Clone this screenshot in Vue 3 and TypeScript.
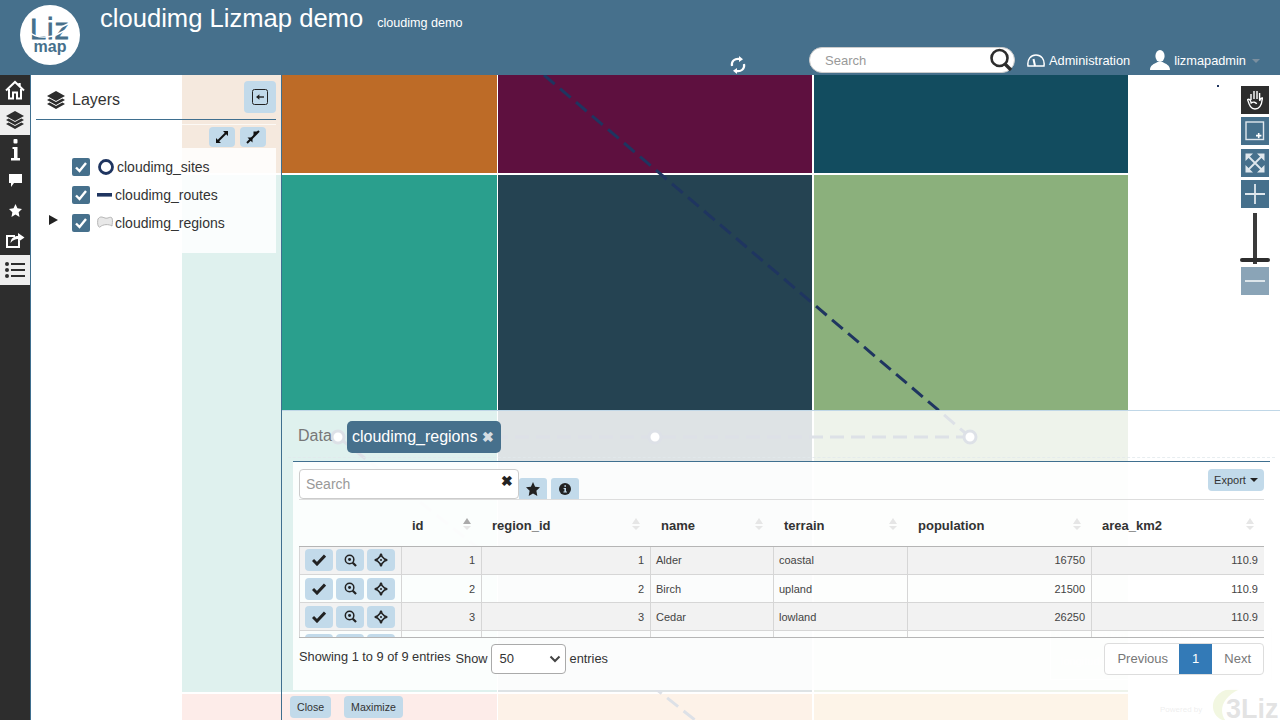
<script setup lang="ts">
const tiles = ['orange', 'plum', 'petrol', 'teal', 'slate', 'sage', 'coral', 'sand', 'cream']

const layers = [
  { name: 'cloudimg_sites', kind: 'point' },
  { name: 'cloudimg_routes', kind: 'line' },
  { name: 'cloudimg_regions', kind: 'poly' }
]

const columns = [
  { key: 'id', label: 'id', sorted: true },
  { key: 'region', label: 'region_id' },
  { key: 'name', label: 'name' },
  { key: 'terrain', label: 'terrain' },
  { key: 'population', label: 'population' },
  { key: 'area', label: 'area_km2' }
]

// fourth row only peeks out of the scroller, its text is below the fold
const rows = [
  { id: 1, region: 1, name: 'Alder', terrain: 'coastal', population: 16750, area: '110.9' },
  { id: 2, region: 2, name: 'Birch', terrain: 'upland', population: 21500, area: '110.9' },
  { id: 3, region: 3, name: 'Cedar', terrain: 'lowland', population: 26250, area: '110.9' },
  { id: '', region: '', name: '', terrain: '', population: '', area: '' }
]
</script>

<template>
  <div class="page">
    <!-- map canvas, everything else floats over it -->
    <div class="map">
      <div class="tiles">
        <div v-for="t in tiles" :key="t" class="tile" :class="'tile--' + t"></div>
      </div>
      <svg class="vectors" width="1280" height="645" viewBox="0 0 1280 645">
        <g fill="none" stroke="#1f3560" stroke-width="3" stroke-dasharray="14 7">
          <path d="M544 0 L970 362" />
          <path d="M970 362 L338 362" />
          <path d="M338 362 L695 645" />
        </g>
        <g fill="#fff" stroke="#1f3560" stroke-width="3">
          <circle cx="338" cy="362" r="6" />
          <circle cx="655" cy="362" r="6" />
          <circle cx="970" cy="362" r="6" />
        </g>
        <rect x="1217" y="10" width="2" height="2" fill="#1f3560" />
      </svg>
      <div class="scale-box">
        <span>0</span><span>50 km</span><span>100 km</span>
        <em>longitude</em>
      </div>
      <div class="credit">
        <span class="credit__by">Powered by</span>
        <svg class="credit__leaf" width="34" height="36" viewBox="0 0 34 36">
          <path d="M30 3 C14 0 2 10 3 22 C4 30 10 34 16 35 C9 27 10 12 30 3Z" fill="#a8c83a" />
        </svg>
        <span class="credit__name">3Liz</span>
      </div>
    </div>

    <header class="topbar">
      <div class="logo">
        <svg width="60" height="60" viewBox="0 0 60 60">
          <circle cx="30" cy="30" r="30" fill="#fff" />
          <text x="30" y="34" text-anchor="middle" class="logo__liz">Liz</text>
          <path d="M8 26 C15 33 24 33 33 31 M33 26 L52 17 M36 30 L52 22" fill="none" stroke="#fff" stroke-width="1.4" />
          <text x="30" y="47" text-anchor="middle" class="logo__map">map</text>
        </svg>
      </div>
      <div class="brand">
        <h1>cloudimg Lizmap demo</h1>
        <span>cloudimg demo</span>
      </div>
      <nav class="topnav">
        <svg class="refresh" width="16" height="18" viewBox="0 0 16 18" fill="none" stroke="#fff" stroke-width="2.2">
          <path d="M2 10 C1 5 5 2 10 3" />
          <path d="M14 8 C15 13 11 16 6 15" />
          <path d="M9 0 L13 3.2 L9 6Z" fill="#fff" stroke="none" />
          <path d="M7 18 L3 14.8 L7 12Z" fill="#fff" stroke="none" />
        </svg>
        <div class="search">
          <span>Search</span>
          <svg width="24" height="24" viewBox="0 0 24 24" fill="none" stroke="#2d2d2d">
            <circle cx="10.5" cy="10" r="8" stroke-width="2.6" />
            <path d="M16 16 L22 22" stroke-width="3.4" />
          </svg>
        </div>
        <a class="navlink navlink--admin">
          <svg width="18" height="13" viewBox="0 0 18 13" fill="none" stroke="#fff" stroke-width="1.5">
            <path d="M1 12 C0 5 4 1 9 1 C14 1 18 5 17 12Z" />
            <path d="M8 12 L6.5 5" stroke-width="2" />
          </svg>
          Administration
        </a>
        <a class="navlink navlink--user">
          <svg width="20" height="20" viewBox="0 0 20 20" fill="#fff">
            <ellipse cx="10" cy="6" rx="4.6" ry="6" />
            <path d="M0 20 C0 15 4 14 7.5 12 L12.5 12 C16 14 20 15 20 20Z" />
          </svg>
          lizmapadmin
          <i class="caret"></i>
        </a>
      </nav>
    </header>

    <div class="workspace">
      <aside class="dock">
        <div class="dock__item">
          <svg width="20" height="20" viewBox="0 0 20 20" fill="none" stroke="#fff" stroke-width="2">
            <path d="M1 10.5 L10 2 L19 10.5" />
            <path d="M4 9 V18.5 H8 V12.5 H12 V18.5 H16 V9" />
            <path d="M14.5 3 V6" stroke-width="2.4" />
          </svg>
        </div>
        <div class="dock__item dock__item--active">
          <svg width="18" height="20" viewBox="0 0 18 20" fill="#2d2d2d">
            <path d="M9 1 L18 6 L9 11 L0 6Z" />
            <path d="M2.6 8.6 L0 10 L9 15 L18 10 L15.4 8.6 L9 12 Z" />
            <path d="M2.6 12.6 L0 14 L9 19 L18 14 L15.4 12.6 L9 16 Z" />
          </svg>
        </div>
        <div class="dock__item">
          <svg width="9" height="22" viewBox="0 0 9 22" fill="#fff">
            <rect x="2.5" y="0" width="4" height="4.5" rx="1" />
            <path d="M1.5 8 H6.5 V19 H9 V21.5 H0 V19 H3 V10 H1.5Z" />
          </svg>
        </div>
        <div class="dock__item">
          <svg width="13" height="13" viewBox="0 0 13 13" fill="#fff">
            <path d="M0 0 H13 V9 H5 L2 13 V9 H0Z" />
          </svg>
        </div>
        <div class="dock__item">
          <svg width="13" height="13" viewBox="0 0 24 24" fill="#fff">
            <path d="M12 0 L15.6 8 L24 9 L17.8 15 L19.4 24 L12 19.6 L4.6 24 L6.2 15 L0 9 L8.4 8Z" />
          </svg>
        </div>
        <div class="dock__item">
          <svg width="19" height="16" viewBox="0 0 19 16" fill="none" stroke="#fff" stroke-width="2">
            <path d="M9 4 H1 V15 H13 V9" />
            <path d="M4.5 11 C5 6 8 4 12 4 V1 L18.5 5.5 L12 10 V7 C9 7 7 8 4.5 11Z" fill="#fff" stroke="none" />
          </svg>
        </div>
        <div class="dock__item dock__item--active">
          <svg width="20" height="16" viewBox="0 0 20 16" fill="#2d2d2d">
            <circle cx="2" cy="2" r="2" />
            <circle cx="2" cy="8" r="2" />
            <circle cx="2" cy="14" r="2" />
            <rect x="6" y="1" width="14" height="2" />
            <rect x="6" y="7" width="14" height="2" />
            <rect x="6" y="13" width="14" height="2" />
          </svg>
        </div>
      </aside>

      <section class="layers">
        <div class="layers__head">
          <svg class="layers__icon" width="18" height="20" viewBox="0 0 18 20" fill="#2d2d2d">
            <path d="M9 1 L18 6 L9 11 L0 6Z" />
            <path d="M2.6 8.6 L0 10 L9 15 L18 10 L15.4 8.6 L9 12 Z" />
            <path d="M2.6 12.6 L0 14 L9 19 L18 14 L15.4 12.6 L9 16 Z" />
          </svg>
          <span class="layers__title">Layers</span>
          <button class="btn-blue btn-collapse">
            <svg width="16" height="16" viewBox="0 0 16 16" fill="none" stroke="#222">
              <rect x="0.5" y="0.5" width="15" height="15" rx="2" />
              <path d="M12 8 H5" stroke-width="1.4" />
              <path d="M4 8 L7.4 5.2 V10.8Z" fill="#222" stroke="none" />
            </svg>
          </button>
        </div>
        <div class="layers__tools">
          <button class="btn-blue btn-small">
            <svg width="14" height="14" viewBox="0 0 14 14" fill="#111" stroke="#111">
              <path d="M3 11 L11 3" stroke-width="2" />
              <path d="M8 1 H13 V6Z M1 8 V13 H6Z" stroke="none" />
            </svg>
          </button>
          <button class="btn-blue btn-small">
            <svg width="14" height="14" viewBox="0 0 14 14" fill="#111" stroke="#111">
              <path d="M1 13 L13 1" stroke-width="2" />
              <path d="M7.5 1.5 H12.5 L7.5 6.5Z M1.5 7.5 H6.5 V12.5Z" stroke="none" />
            </svg>
          </button>
        </div>
        <ul class="tree">
          <li v-for="l in layers" :key="l.name" class="tree__row">
            <i v-if="l.kind === 'poly'" class="tree__toggle"></i>
            <span class="check">
              <svg width="14" height="14" viewBox="0 0 14 14" fill="none" stroke="#fff" stroke-width="2.4">
                <path d="M2 7.5 L5.5 11 L12 3" />
              </svg>
            </span>
            <svg v-if="l.kind === 'point'" class="symbol symbol--point" width="16" height="16" viewBox="0 0 16 16">
              <circle cx="8" cy="8" r="6.5" fill="none" stroke="#1f3560" stroke-width="2.8" />
            </svg>
            <svg v-else-if="l.kind === 'line'" class="symbol" width="16" height="16" viewBox="0 0 16 16">
              <rect x="0" y="6" width="15" height="3.6" fill="#1f3560" />
            </svg>
            <svg v-else class="symbol" width="16" height="16" viewBox="0 0 16 16">
              <path d="M1 4 C3 1 5 2 8 3 C11 4 13 1 15 3 C16 6 15 9 15 11 C12 9 6 9 3 12 C1 13 0 8 1 4Z" fill="#e8e8e8" stroke="#b5b5b5" />
            </svg>
            <span class="tree__name">{{ l.name }}</span>
          </li>
        </ul>
      </section>
    </div>

    <div class="mapctl">
      <button class="mapctl__btn mapctl__btn--dark">
        <svg width="16" height="20" viewBox="0 0 16 20" fill="none" stroke="#fff" stroke-width="1.4">
          <path d="M4 10 V4 M7 9 V1 M10 9 V1 M12.6 10 V3 M12.6 11 C13 9 14.5 8 15.4 8 C15 13 14 19 8 19 C4 19 2.5 16 0.6 9.6 C2 8.6 3.6 10 4.2 13 C6 11.6 9 12 9.6 14" />
        </svg>
      </button>
      <button class="mapctl__btn mapctl__btn--box">
        <svg width="20" height="20" viewBox="0 0 20 20" fill="none" stroke="#dfe7ed" stroke-width="1.4">
          <rect x="1" y="1" width="17.5" height="17.5" />
          <path d="M11 14.6 H16.4 M13.7 12 V17.2" stroke="#fff" stroke-width="1.6" />
        </svg>
      </button>
      <button class="mapctl__btn">
        <svg width="20" height="20" viewBox="0 0 20 20" fill="#dfe7ed" stroke="#dfe7ed">
          <path d="M2 2 L18 18 M18 2 L2 18" stroke-width="1.8" />
          <path d="M0.5 0.5 H8 L0.5 8Z M19.5 0.5 H12 L19.5 8Z M0.5 19.5 H8 L0.5 12Z M19.5 19.5 H12 L19.5 12Z" stroke="none" />
        </svg>
      </button>
      <button class="mapctl__btn">
        <svg width="20" height="20" viewBox="0 0 20 20" stroke="#dfe7ed" stroke-width="1.8">
          <path d="M0 10 H20 M10 0 V20" />
        </svg>
      </button>
      <div class="mapctl__slider"><i></i></div>
      <button class="mapctl__btn mapctl__btn--off">
        <svg width="20" height="20" viewBox="0 0 20 20" stroke="#e6ecf0" stroke-width="1.8">
          <path d="M0 10 H20" />
        </svg>
      </button>
    </div>

    <section class="attr">
      <div class="attr__tabs">
        <span class="attr__label">Data</span>
        <div class="attr__tab">cloudimg_regions <b>✖</b></div>
      </div>
      <div class="attr__body">
        <div class="attr__toolbar">
          <div class="filter">
            <span>Search</span>
            <b>✖</b>
          </div>
          <button class="btn-blue btn-tool">
            <svg width="14" height="14" viewBox="0 0 24 24" fill="#222">
              <path d="M12 0 L15.6 8 L24 9 L17.8 15 L19.4 24 L12 19.6 L4.6 24 L6.2 15 L0 9 L8.4 8Z" />
            </svg>
          </button>
          <button class="btn-blue btn-tool btn-tool--info">
            <svg width="12" height="12" viewBox="0 0 12 12">
              <circle cx="6" cy="6" r="6" fill="#222" />
              <path d="M4.6 5 H7 V8.6 H8 V9.6 H4.4 V8.6 H5.4 V6 H4.6Z M5.4 2.2 H7 V3.8 H5.4Z" fill="#c2daea" />
            </svg>
          </button>
          <button class="btn-blue btn-export">Export <i></i></button>
        </div>
        <table class="grid grid--head">
          <colgroup>
            <col class="c0" /><col class="c1" /><col class="c2" /><col class="c3" /><col class="c4" /><col class="c5" /><col class="c6" />
          </colgroup>
          <thead>
            <tr>
              <th></th>
              <th v-for="c in columns" :key="c.key">
                <div class="th">
                  <span>{{ c.label }}</span>
                  <span class="sort" :class="{ 'sort--on': c.sorted }"><i></i><i></i></span>
                </div>
              </th>
            </tr>
          </thead>
        </table>
        <div class="scroller">
          <table class="grid">
            <colgroup>
              <col class="c0" /><col class="c1" /><col class="c2" /><col class="c3" /><col class="c4" /><col class="c5" /><col class="c6" />
            </colgroup>
            <tbody>
              <tr v-for="(r, i) in rows" :key="i">
                <td class="actions">
                  <div class="actions__wrap">
                    <button class="btn-blue btn-row">
                      <svg width="14" height="12" viewBox="0 0 14 12" fill="none" stroke="#222" stroke-width="3">
                        <path d="M1 6 L5 10 L13 1.5" />
                      </svg>
                    </button>
                    <button class="btn-blue btn-row">
                      <svg width="13" height="13" viewBox="0 0 14 14" fill="none" stroke="#222">
                        <circle cx="6" cy="6" r="4.6" stroke-width="1.6" />
                        <circle cx="6" cy="6" r="1.6" fill="#222" stroke="none" />
                        <path d="M9.4 9.4 L13 13" stroke-width="2.4" />
                      </svg>
                    </button>
                    <button class="btn-blue btn-row">
                      <svg width="14" height="14" viewBox="0 0 14 14" fill="#222" stroke="#222">
                        <path d="M7 2.5 L11.5 7 L7 11.5 L2.5 7Z" fill="none" stroke-width="1.6" />
                        <path d="M7 0 L9 2.6 H5Z M7 14 L9 11.4 H5Z M0 7 L2.6 5 V9Z M14 7 L11.4 5 V9Z" stroke="none" />
                        <circle cx="7" cy="7" r="1" stroke="none" />
                      </svg>
                    </button>
                  </div>
                </td>
                <td class="num">{{ r.id }}</td>
                <td class="num">{{ r.region }}</td>
                <td>{{ r.name }}</td>
                <td>{{ r.terrain }}</td>
                <td class="num">{{ r.population }}</td>
                <td class="num">{{ r.area }}</td>
              </tr>
            </tbody>
          </table>
        </div>
        <div class="attr__foot">
          <span class="info">Showing 1 to 9 of 9 entries</span>
          <label class="length">
            Show
            <span class="select">50
              <svg width="12" height="8" viewBox="0 0 12 8" fill="none" stroke="#444" stroke-width="2">
                <path d="M1.5 1.5 L6 6 L10.5 1.5" />
              </svg>
            </span>
            entries
          </label>
          <div class="pager">
            <a>Previous</a>
            <a class="pager__on">1</a>
            <a>Next</a>
          </div>
        </div>
      </div>
      <div class="attr__actions">
        <button class="btn-blue btn-bottom">Close</button>
        <button class="btn-blue btn-bottom">Maximize</button>
      </div>
    </section>
  </div>
</template>

<style scoped>
.page {
  position: relative;
  width: 1280px;
  height: 720px;
  overflow: hidden;
  background: #fff;
  color: #333;
  font-family: "Liberation Sans", Arial, sans-serif;
  font-size: 13px;
}

.map {
  position: absolute;
  inset: 75px 0 0 0;
}

.tiles {
  position: absolute;
  left: 182px;
  top: 0;
  display: grid;
  grid-template-columns: 314.5px 314px 314px;
  grid-template-rows: 98px 517px 60px;
  column-gap: 1.5px;
  row-gap: 2px;
}

.tile--orange { background: #bd6b27; }
.tile--plum { background: #5e103f; }
.tile--petrol { background: #124c5f; }
.tile--teal { background: #2a9f8d; }
.tile--slate { background: #254352; }
.tile--sage { background: #8bb07c; }
.tile--coral { background: #f27d6c; }
.tile--sand { background: #f2aa66; }
.tile--cream { background: #f2b566; }

.vectors {
  position: absolute;
  left: 0;
  top: 0;
}

.scale-box {
  position: absolute;
  left: 1050px;
  top: 553px;
  width: 220px;
  height: 50px;
  color: #bbb;
  font-size: 11px;
  border: 1px solid #f4f4f4;
}

.scale-box span {
  margin-left: 4px;
  margin-right: 30px;
}

.scale-box em {
  display: block;
  font-style: normal;
  margin: 14px 0 0 10px;
}

.credit {
  position: absolute;
  left: 1160px;
  top: 610px;
  width: 120px;
  height: 35px;
  display: flex;
  align-items: flex-end;
}

.credit__by {
  font-size: 8px;
  color: #888;
  width: 50px;
  margin-bottom: 6px;
}

.credit__leaf {
  flex: none;
  margin-bottom: -2px;
}

.credit__name {
  margin-left: -18px;
  margin-bottom: -5px;
  font-size: 27px;
  font-weight: 700;
  color: #444;
}

.topbar {
  position: relative;
  height: 75px;
  display: flex;
  background: #46708c;
  color: #fff;
}

.logo {
  margin: 5px 0 0 20px;
  height: 60px;
}

.logo__liz {
  font-family: "Liberation Sans", sans-serif;
  font-size: 29px;
  letter-spacing: 1px;
  fill: #46708c;
  stroke: #46708c;
  stroke-width: 0.8;
}

.logo__map {
  font-family: "Liberation Sans", sans-serif;
  font-size: 16px;
  font-weight: 700;
  fill: #46708c;
}

.brand {
  margin-left: 20px;
  padding-top: 4px;
  display: flex;
  align-items: baseline;
  height: 30px;
}

.brand h1 {
  margin: 0;
  font-size: 25.6px;
  font-weight: 400;
  line-height: 28px;
}

.brand span {
  margin-left: 14px;
  font-size: 12.6px;
}

.topnav {
  margin-left: auto;
  display: flex;
  align-items: flex-end;
  padding-bottom: 2px;
}

.refresh {
  margin-right: 63px;
  margin-bottom: -1px;
}

.search {
  width: 206px;
  height: 26px;
  box-sizing: border-box;
  display: flex;
  align-items: center;
  justify-content: space-between;
  padding: 0 1px 0 15px;
  background: #fff;
  border: 1px solid #ccc;
  border-radius: 13px;
  color: #999;
  font-size: 13px;
}

.navlink {
  display: flex;
  align-items: center;
  height: 26px;
  color: #fff;
  font-size: 12.8px;
}

.navlink--admin {
  margin-left: 12px;
  gap: 4px;
}

.navlink--user {
  margin-left: 20px;
  gap: 4px;
  margin-right: 20px;
}

.caret {
  margin-left: 2px;
  margin-top: 2px;
  border: 4px solid transparent;
  border-top-color: #7b8f9f;
  border-bottom: 0;
}

.workspace {
  position: relative;
  display: flex;
  height: 645px;
}

.dock {
  width: 30px;
  flex: none;
  background: #2d2d2d;
}

.dock__item {
  height: 30px;
  display: flex;
  align-items: center;
  justify-content: center;
}

.dock__item--active {
  background: #eee;
}

.layers {
  width: 252px;
  box-sizing: border-box;
  padding: 0 5px;
  background: rgba(255, 255, 255, 0.85);
  border-left: 1px solid #3f6f8f;
  border-right: 1px solid #3f6f8f;
}

.layers__head {
  height: 44px;
  display: flex;
  align-items: center;
  padding-left: 11px;
  border-bottom: 1px solid #3f6f8f;
}

.layers__icon {
  margin-top: 6px;
}

.layers__title {
  margin-left: 7px;
  margin-top: 6px;
  font-size: 16px;
}

.btn-blue {
  border: 0;
  padding: 0;
  background: #c2daea;
  border-radius: 4px;
  color: #333;
  font-family: inherit;
  display: inline-flex;
  align-items: center;
  justify-content: center;
}

.btn-collapse {
  width: 32px;
  height: 32px;
  margin-left: auto;
}

.layers__tools {
  height: 24px;
  box-sizing: border-box;
  margin-top: 4px;
  padding-top: 2px;
  display: flex;
  justify-content: flex-end;
  gap: 5px;
  padding-right: 10px;
  border-top: 1px solid rgba(255, 255, 255, 0.7);
}

.btn-small {
  width: 26px;
  height: 20px;
}

.tree {
  list-style: none;
  margin: 0;
  padding: 5px 0 6px;
  height: 105px;
  box-sizing: border-box;
  background: rgba(255, 255, 255, 0.85);
}

.tree__row {
  position: relative;
  height: 28px;
  display: flex;
  align-items: center;
  padding-left: 36px;
}

.tree__toggle {
  position: absolute;
  left: 13px;
  top: 6px;
  border-left: 9px solid #222;
  border-top: 5px solid transparent;
  border-bottom: 5px solid transparent;
}

.check {
  width: 18px;
  height: 18px;
  flex: none;
  border-radius: 2px;
  background: #46708c;
  display: flex;
  align-items: center;
  justify-content: center;
}

.symbol {
  margin-left: 7px;
  flex: none;
}

.symbol--point {
  margin-left: 8px;
  margin-right: 1px;
}

.tree__name {
  margin-left: 2px;
  font-size: 14px;
  line-height: 16px;
}

.mapctl {
  position: absolute;
  left: 1241px;
  top: 86px;
  width: 28px;
  display: flex;
  flex-direction: column;
}

.mapctl__btn {
  width: 28px;
  height: 28px;
  padding: 0;
  border: 0;
  margin-bottom: 3px;
  background: #46708c;
  display: flex;
  align-items: center;
  justify-content: center;
}

.mapctl__btn--box {
  margin-bottom: 4px;
}

.mapctl__btn--dark {
  background: #2d2d2d;
}

.mapctl__btn--off {
  background: #8aa4b7;
}

.mapctl__slider {
  position: relative;
  height: 56px;
}

.mapctl__slider::before {
  content: '';
  position: absolute;
  left: 12px;
  top: 2px;
  width: 4px;
  height: 51px;
  background: #3a3a3a;
}

.mapctl__slider i {
  position: absolute;
  left: -1px;
  top: 47px;
  width: 30px;
  height: 4px;
  border-radius: 3px;
  background: #2d2d2d;
}

.attr {
  position: absolute;
  left: 282px;
  top: 410px;
  width: 998px;
  height: 310px;
  box-sizing: border-box;
  background: rgba(255, 255, 255, 0.85);
  border-top: 1px solid #c0d7e7;
}

.attr__tabs {
  height: 46px;
  box-sizing: border-box;
  display: flex;
  align-items: flex-start;
  margin: 0 5px 3px 6px;
  padding: 10px 0 0 10px;
  border-bottom: 1px dashed rgba(225, 232, 236, 0.8);
  height: 47px;
}

.attr__label {
  font-size: 16px;
  color: #777;
  margin-top: 6px;
  width: 49px;
}

.attr__tab {
  height: 32px;
  box-sizing: border-box;
  padding: 0 7px 0 5px;
  display: flex;
  align-items: center;
  gap: 5px;
  border-radius: 5px;
  background: #46708c;
  color: #fff;
  font-size: 16px;
}

.attr__tab b {
  font-size: 14px;
  color: #d5dde3;
}

.attr__body {
  position: relative;
  width: 977px;
  height: 229px;
  box-sizing: border-box;
  margin-left: 11px;
  padding: 7px 6px 0;
  background: rgba(255, 255, 255, 0.88);
  border-top: 1px solid #3f6f8f;
}

.attr__toolbar {
  height: 30px;
  display: flex;
  align-items: flex-end;
  border-bottom: 1px solid #ddd;
}

.filter {
  width: 220px;
  height: 30px;
  box-sizing: border-box;
  padding: 0 5px 0 6px;
  display: flex;
  align-items: center;
  justify-content: space-between;
  background: #fff;
  border: 1px solid #ccc;
  border-radius: 4px;
  color: #999;
  font-size: 14px;
}

.filter b {
  font-size: 14px;
  color: #222;
  margin-bottom: 6px;
}

.btn-tool {
  width: 28px;
  height: 21px;
  border-radius: 3px 3px 0 0;
}

.btn-tool--info {
  margin-left: 4px;
}

.btn-export {
  height: 22px;
  width: 56px;
  margin-left: auto;
  margin-bottom: 8px;
  font-size: 11px;
}

.btn-export i {
  margin-left: 4px;
  border: 4px solid transparent;
  border-top-color: #222;
  border-bottom: 0;
}

.grid {
  table-layout: fixed;
  border-collapse: collapse;
  width: 965px;
  font-size: 11px;
}

.c0 { width: 102px; }
.c1 { width: 80px; }
.c2 { width: 169px; }
.c3 { width: 123px; }
.c4 { width: 134px; }
.c5 { width: 184px; }
.c6 { width: 173px; }

.grid--head th {
  height: 46px;
  padding: 5px 10px 0 11px;
  box-sizing: border-box;
  font-size: 13px;
  text-align: left;
  color: #333;
  border-bottom: 1px solid #b5b5b5;
}

.th {
  display: flex;
  align-items: center;
  justify-content: space-between;
}

.sort {
  display: flex;
  flex-direction: column;
  gap: 2px;
  margin-top: -3px;
}

.sort i {
  border-left: 4px solid transparent;
  border-right: 4px solid transparent;
  border-bottom: 6px solid #e6e6e6;
}

.sort i + i {
  border-bottom: 0;
  border-top: 4px solid #e6e6e6;
}

.sort--on i:first-child {
  border-bottom-color: #aaa;
}

.scroller {
  height: 91px;
  box-sizing: border-box;
  overflow: hidden;
  border-bottom: 1px solid #b5b5b5;
}

.grid td {
  height: 28px;
  box-sizing: border-box;
  padding: 0 5px;
  border: 1px solid #d6d6d6;
  border-top: 0;
  color: #444;
}

.grid tr:nth-child(odd) td {
  background: #f2f2f2;
}

.grid .num {
  text-align: right;
  padding-right: 6px;
}

.grid td.actions {
  padding: 0 0 0 5px;
}

.actions__wrap {
  display: flex;
  gap: 3px;
}

.btn-row {
  width: 28px;
  height: 22px;
  flex: none;
}

.attr__foot {
  position: relative;
  height: 52px;
  display: flex;
  align-items: flex-start;
  padding-top: 6px;
  box-sizing: border-box;
}

.info {
  margin-top: 5px;
  font-size: 12.8px;
}

.length {
  margin-left: 5px;
  display: flex;
  align-items: center;
  gap: 3px;
  font-size: 12.8px;
}

.select {
  width: 75px;
  height: 30px;
  box-sizing: border-box;
  padding: 0 4px 0 8px;
  margin-right: 1px;
  display: flex;
  align-items: center;
  justify-content: space-between;
  background: #fff;
  border: 1px solid #aaa;
  border-radius: 4px;
  font-size: 13px;
}

.pager {
  margin-left: auto;
  margin-top: -1px;
  display: flex;
  height: 32px;
  box-sizing: border-box;
  font-size: 13px;
  color: #777;
  border: 1px solid #ddd;
  border-radius: 4px;
  overflow: hidden;
  background: #fff;
}

.pager a {
  padding: 0 12px;
  line-height: 30px;
}

.pager a:first-child {
  padding-right: 11px;
}

.pager a.pager__on {
  padding: 0 13px;
  background: #337ab7;
  color: #fff;
}

.attr__actions {
  display: flex;
  gap: 13px;
  padding: 6px 0 0 8px;
}

.btn-bottom {
  height: 22px;
  padding: 0 7px;
  font-size: 10.6px;
}
</style>

<style>
html, body { margin: 0; }
</style>
